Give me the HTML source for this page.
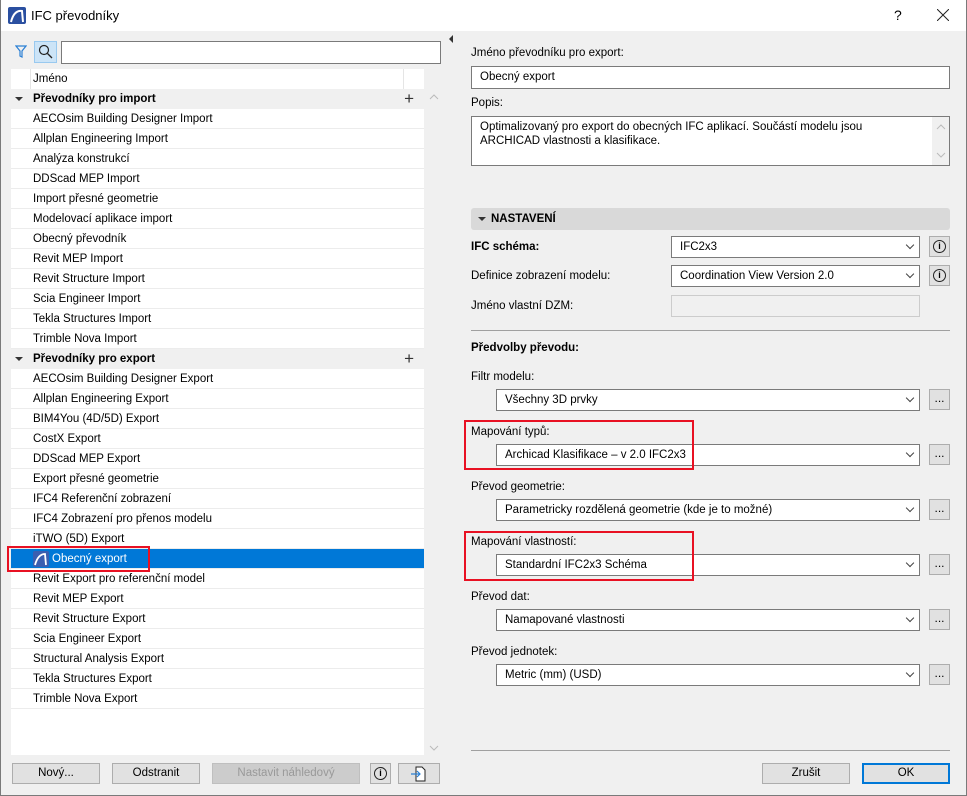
<!DOCTYPE html>
<html><head><meta charset="utf-8"><style>
*{box-sizing:border-box;margin:0;padding:0}
body{width:967px;height:796px;overflow:hidden;background:#f0f0f0;font-family:"Liberation Sans","DejaVu Sans",sans-serif;font-size:11.5px;color:#000;position:relative}
.a{position:absolute}
.win{position:absolute;left:0;top:0;width:967px;height:796px;border:1px solid #7a7a7a;border-top:none}
.title{left:0;top:0;width:967px;height:31px;background:#fff}
.list{left:11px;top:69px;width:413px;height:686px;background:#fff}
.row{height:20px;line-height:20px;padding-left:22px;border-bottom:1px solid #ececec;white-space:nowrap;position:relative}
.grp{background:#f0f0f0;font-weight:bold;border-bottom:none}
.grp:before{content:"";position:absolute;left:4px;top:8px;border-left:4px solid transparent;border-right:4px solid transparent;border-top:4px solid #333}
.plus{position:absolute;right:10px;top:0;font-weight:normal;font-size:17px;color:#333}
.sel{background:#0078d7;color:#fff}
.inp{background:#fff;border:1px solid #7a7a7a;height:23px;line-height:21px;padding-left:8px}
.dd{background:#fff;border:1px solid #7a7a7a;height:22px;line-height:20px;padding-left:8px}
.dd:after{content:"";position:absolute;right:6px;top:5px;width:5px;height:5px;border-right:1px solid #444;border-bottom:1px solid #444;transform:rotate(45deg)}
.btn{background:#e1e1e1;border:1px solid #adadad;text-align:center;height:21px;line-height:19px}
.sq{width:21px;height:21px;background:#e1e1e1;border:1px solid #adadad;text-align:center;line-height:17px;font-size:12px}
.info{display:inline-block;width:13px;height:13px;border:1.5px solid #222;border-radius:50%;font-size:9px;line-height:10px;font-weight:bold;margin-top:3px}
.red{border:2px solid #e81123}
.lbl{left:471px}
</style></head><body>
<div class="a title"></div>
<svg class="a" style="left:8px;top:7px" width="18" height="17" viewBox="0 0 18 17"><rect width="18" height="17" rx="2" fill="#2a4fa0"/><path d="M3 15 Q6 3 14 4 L15 15" fill="none" stroke="#fff" stroke-width="2"/></svg>
<div class="a" style="left:31px;top:8px;font-size:13px">IFC převodníky</div>
<div class="a" style="left:894px;top:7px;font-size:14px">?</div>
<svg class="a" style="left:937px;top:9px" width="12" height="12"><path d="M0 0L12 12M12 0L0 12" stroke="#222" stroke-width="1"/></svg>
<div class="win"></div>

<svg class="a" style="left:15px;top:45px" width="12" height="13"><path d="M1 1H11L7 6V12L5 11V6Z" fill="none" stroke="#2a7fd4" stroke-width="1.2"/></svg>
<div class="a" style="left:34px;top:41px;width:23px;height:22px;background:#cce4f7;border:1px solid #99c9ef"></div>
<svg class="a" style="left:38px;top:44px" width="16" height="16"><circle cx="6" cy="6" r="4.5" fill="none" stroke="#222" stroke-width="1.2"/><path d="M9.5 9.5L14 14" stroke="#222" stroke-width="1.3"/></svg>
<div class="a" style="left:61px;top:41px;width:380px;height:23px;background:#fff;border:1px solid #7a7a7a"></div>

<div class="a list">
<div class="row" style="border-bottom:none;height:20px"><span style="position:absolute;left:0;top:0;width:20px;height:20px;border-right:1px solid #e5e5e5"></span>Jméno<span style="position:absolute;left:392px;top:0;height:20px;border-left:1px solid #e5e5e5"></span></div>
<div class="row grp">Převodníky pro import<span class="plus">+</span></div>
<div class="row">AECOsim Building Designer Import</div>
<div class="row">Allplan Engineering Import</div>
<div class="row">Analýza konstrukcí</div>
<div class="row">DDScad MEP Import</div>
<div class="row">Import přesné geometrie</div>
<div class="row">Modelovací aplikace import</div>
<div class="row">Obecný převodník</div>
<div class="row">Revit MEP Import</div>
<div class="row">Revit Structure Import</div>
<div class="row">Scia Engineer Import</div>
<div class="row">Tekla Structures Import</div>
<div class="row">Trimble Nova Import</div>
<div class="row grp">Převodníky pro export<span class="plus">+</span></div>
<div class="row">AECOsim Building Designer Export</div>
<div class="row">Allplan Engineering Export</div>
<div class="row">BIM4You (4D/5D) Export</div>
<div class="row">CostX Export</div>
<div class="row">DDScad MEP Export</div>
<div class="row">Export přesné geometrie</div>
<div class="row">IFC4 Referenční zobrazení</div>
<div class="row">IFC4 Zobrazení pro přenos modelu</div>
<div class="row">iTWO (5D) Export</div>
<div class="row sel"><svg style="position:absolute;left:22px;top:2px" width="16" height="16" viewBox="0 0 16 16"><rect width="16" height="16" rx="2" fill="#3a5fb0"/><path d="M2 14 Q5 3 12 3 L13 14" fill="none" stroke="#fff" stroke-width="1.8"/></svg><span style="padding-left:19px">Obecný export</span></div>
<div class="row">Revit Export pro referenční model</div>
<div class="row">Revit MEP Export</div>
<div class="row">Revit Structure Export</div>
<div class="row">Scia Engineer Export</div>
<div class="row">Structural Analysis Export</div>
<div class="row">Tekla Structures Export</div>
<div class="row">Trimble Nova Export</div>
</div>
<svg class="a" style="left:429px;top:94px" width="10" height="6"><path d="M1 5L5 1L9 5" fill="none" stroke="#bbb"/></svg>
<svg class="a" style="left:429px;top:745px" width="10" height="6"><path d="M1 1L5 5L9 1" fill="none" stroke="#bbb"/></svg>
<div class="a red" style="left:7px;top:546px;width:143px;height:26px"></div>

<div class="a btn" style="left:12px;top:763px;width:88px">Nový...</div>
<div class="a btn" style="left:112px;top:763px;width:88px">Odstranit</div>
<div class="a btn" style="left:212px;top:763px;width:148px;color:#999;background:#ccc;border-color:#bfbfbf">Nastavit náhledový</div>
<div class="a sq" style="left:370px;top:763px"><span class="info">i</span></div>
<svg class="a" style="left:398px;top:763px" width="42" height="21"><rect x=".5" y=".5" width="41" height="20" fill="#e1e1e1" stroke="#adadad"/><path d="M18 4H24L27 7V18H18Z" fill="#fff" stroke="#222"/><path d="M13 11H22M19 8L22 11L19 14" fill="none" stroke="#2a7fd4" stroke-width="1.2"/></svg>

<div class="a" style="left:449px;top:35px;border-top:4px solid transparent;border-bottom:4px solid transparent;border-right:4px solid #333"></div>
<div class="a lbl" style="top:47px">Jméno převodníku pro export:</div>
<div class="a inp" style="left:471px;top:66px;width:479px">Obecný export</div>
<div class="a lbl" style="top:97px">Popis:</div>
<div class="a" style="left:471px;top:116px;width:479px;height:50px;background:#fff;border:1px solid #7a7a7a;padding:3px 30px 0 8px;line-height:14px">Optimalizovaný pro export do obecných IFC aplikací. Součástí modelu jsou ARCHICAD vlastnosti a klasifikace.</div>
<div class="a" style="left:932px;top:117px;width:17px;height:48px;background:#f0f0f0"></div>
<svg class="a" style="left:936px;top:124px" width="10" height="6"><path d="M1 5L5 1L9 5" fill="none" stroke="#bbb"/></svg>
<svg class="a" style="left:936px;top:152px" width="10" height="6"><path d="M1 1L5 5L9 1" fill="none" stroke="#bbb"/></svg>

<div class="a" style="left:471px;top:208px;width:479px;height:22px;background:#d9d9d9;border-radius:3px;font-weight:bold;line-height:22px;padding-left:20px">NASTAVENÍ</div>
<div class="a" style="left:478px;top:217px;border-left:4px solid transparent;border-right:4px solid transparent;border-top:4px solid #333"></div>

<div class="a lbl" style="top:241px;font-weight:bold">IFC schéma:</div>
<div class="a dd" style="left:671px;top:236px;width:249px">IFC2x3</div>
<div class="a sq" style="left:929px;top:236px"><span class="info">i</span></div>
<div class="a lbl" style="top:270px">Definice zobrazení modelu:</div>
<div class="a dd" style="left:671px;top:265px;width:249px">Coordination View Version 2.0</div>
<div class="a sq" style="left:929px;top:265px"><span class="info">i</span></div>
<div class="a lbl" style="top:300px">Jméno vlastní DZM:</div>
<div class="a" style="left:671px;top:295px;width:249px;height:22px;background:#f0f0f0;border:1px solid #ccc"></div>
<div class="a" style="left:471px;top:330px;width:479px;border-top:1px solid #a0a0a0"></div>
<div class="a lbl" style="top:342px;font-weight:bold">Předvolby převodu:</div>

<div class="a lbl" style="top:371px">Filtr modelu:</div>
<div class="a dd" style="left:496px;top:389px;width:424px">Všechny 3D prvky</div>
<div class="a sq" style="left:929px;top:389px">...</div>
<div class="a lbl" style="top:426px">Mapování typů:</div>
<div class="a dd" style="left:496px;top:444px;width:424px">Archicad Klasifikace – v 2.0 IFC2x3</div>
<div class="a sq" style="left:929px;top:444px">...</div>
<div class="a lbl" style="top:481px">Převod geometrie:</div>
<div class="a dd" style="left:496px;top:499px;width:424px">Parametricky rozdělená geometrie (kde je to možné)</div>
<div class="a sq" style="left:929px;top:499px">...</div>
<div class="a lbl" style="top:536px">Mapování vlastností:</div>
<div class="a dd" style="left:496px;top:554px;width:424px">Standardní IFC2x3 Schéma</div>
<div class="a sq" style="left:929px;top:554px">...</div>
<div class="a lbl" style="top:591px">Převod dat:</div>
<div class="a dd" style="left:496px;top:609px;width:424px">Namapované vlastnosti</div>
<div class="a sq" style="left:929px;top:609px">...</div>
<div class="a lbl" style="top:646px">Převod jednotek:</div>
<div class="a dd" style="left:496px;top:664px;width:424px">Metric (mm) (USD)</div>
<div class="a sq" style="left:929px;top:664px">...</div>

<div class="a red" style="left:464px;top:420px;width:230px;height:50px"></div>
<div class="a red" style="left:464px;top:531px;width:230px;height:50px"></div>

<div class="a" style="left:471px;top:750px;width:479px;border-top:1px solid #a0a0a0"></div>
<div class="a btn" style="left:762px;top:763px;width:88px">Zrušit</div>
<div class="a btn" style="left:862px;top:763px;width:88px;border:2px solid #0078d7;line-height:17px">OK</div>
</body></html>
